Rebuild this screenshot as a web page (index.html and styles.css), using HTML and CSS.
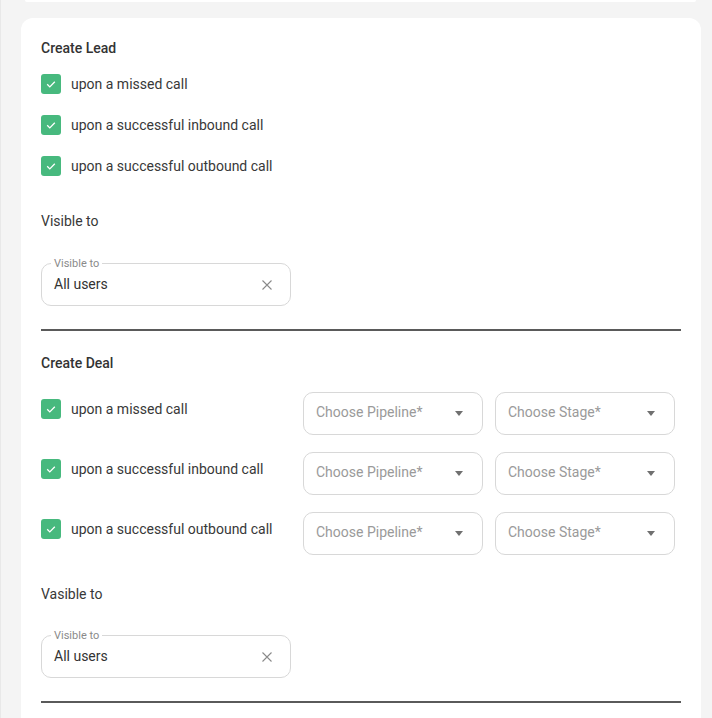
FILE: index.html
```html
<!DOCTYPE html>
<html>
<head>
<meta charset="utf-8">
<link rel="stylesheet" href="styles.css">
</head>
<body>
<div class="page">
  <div class="top-card"></div>
  <div class="card">
    <div class="title">Create Lead</div>
    <div class="lead-list">
      <label class="check-row"><span class="box"><svg viewBox="0 0 20 20" width="20" height="20"><path d="M6.2 10.3l2.6 2.6 5-5.2" fill="none" stroke="#fff" stroke-width="1.3"/></svg></span><span>upon a missed call</span></label>
      <label class="check-row"><span class="box"><svg viewBox="0 0 20 20" width="20" height="20"><path d="M6.2 10.3l2.6 2.6 5-5.2" fill="none" stroke="#fff" stroke-width="1.3"/></svg></span><span>upon a successful inbound call</span></label>
      <label class="check-row"><span class="box"><svg viewBox="0 0 20 20" width="20" height="20"><path d="M6.2 10.3l2.6 2.6 5-5.2" fill="none" stroke="#fff" stroke-width="1.3"/></svg></span><span>upon a successful outbound call</span></label>
    </div>
    <div class="sub">Visible to</div>
    <div class="field">
      <span class="field-label">Visible to</span>
      <span class="field-value">All users</span>
      <svg class="clear" viewBox="0 0 12 12" width="12" height="12"><path d="M1.5 1.5l9 9M10.5 1.5l-9 9" stroke="#8a8a8a" stroke-width="1.1" fill="none"/></svg>
    </div>
    <div class="divider"></div>

    <div class="title deal-title">Create Deal</div>
    <div class="deal-list">
      <div class="deal-row">
        <label class="check-row deal-check"><span class="box"><svg viewBox="0 0 20 20" width="20" height="20"><path d="M6.2 10.3l2.6 2.6 5-5.2" fill="none" stroke="#fff" stroke-width="1.3"/></svg></span><span>upon a missed call</span></label>
        <div class="select"><span>Choose Pipeline*</span><span class="caret"></span></div>
        <div class="select"><span>Choose Stage*</span><span class="caret"></span></div>
      </div>
      <div class="deal-row">
        <label class="check-row deal-check"><span class="box"><svg viewBox="0 0 20 20" width="20" height="20"><path d="M6.2 10.3l2.6 2.6 5-5.2" fill="none" stroke="#fff" stroke-width="1.3"/></svg></span><span>upon a successful inbound call</span></label>
        <div class="select"><span>Choose Pipeline*</span><span class="caret"></span></div>
        <div class="select"><span>Choose Stage*</span><span class="caret"></span></div>
      </div>
      <div class="deal-row">
        <label class="check-row deal-check"><span class="box"><svg viewBox="0 0 20 20" width="20" height="20"><path d="M6.2 10.3l2.6 2.6 5-5.2" fill="none" stroke="#fff" stroke-width="1.3"/></svg></span><span>upon a successful outbound call</span></label>
        <div class="select"><span>Choose Pipeline*</span><span class="caret"></span></div>
        <div class="select"><span>Choose Stage*</span><span class="caret"></span></div>
      </div>
    </div>
    <div class="sub sub-deal">Vasible to</div>
    <div class="field field-deal">
      <span class="field-label">Visible to</span>
      <span class="field-value">All users</span>
      <svg class="clear" viewBox="0 0 12 12" width="12" height="12"><path d="M1.5 1.5l9 9M10.5 1.5l-9 9" stroke="#8a8a8a" stroke-width="1.1" fill="none"/></svg>
    </div>
    <div class="divider divider-deal"></div>
  </div>
</div>
</body>
</html>
```

FILE: styles.css
```css
* { box-sizing: border-box; }
html, body { margin: 0; padding: 0; }
body {
  background: #f4f4f4;
  font-family: Roboto, "Liberation Sans", sans-serif;
  font-size: 14px;
  line-height: 20px;
  color: #363636;
  height: 718px;
  overflow: hidden;
}
.page {
  border-left: 1px solid #e8e8e8;
  height: 718px;
  padding-left: 20px;
}
.top-card {
  margin-left: 4px;
  width: 671px;
  height: 2px;
  background: #fff;
  border-radius: 0 0 10px 10px;
}
.card {
  margin-top: 16px;
  width: 680px;
  background: #fff;
  border-radius: 12px 12px 0 0;
  padding: 20px 20px 40px;
}
.title {
  font-weight: 500;
  color: #333;
}
.lead-list {
  margin-top: 16px;
  display: flex;
  flex-direction: column;
  gap: 21px;
}
.check-row {
  display: flex;
  align-items: center;
  gap: 10px;
  color: #383838;
}
.box {
  width: 20px;
  height: 20px;
  border-radius: 3px;
  background: #47b97e;
  display: flex;
  flex-shrink: 0;
}
.sub {
  margin-top: 35px;
  color: #383838;
}
.field {
  position: relative;
  margin-top: 32px;
  width: 250px;
  height: 43px;
  border: 1px solid #d8d8d8;
  border-radius: 10px;
  display: flex;
  align-items: center;
  padding: 0 17px 2px 12px;
}
.field-label {
  position: absolute;
  left: 9px;
  top: -7px;
  padding: 0 3px;
  background: #fff;
  font-size: 11px;
  line-height: 14px;
  color: #8a8a8a;
}
.field-value {
  flex: 1;
  color: #333;
}
.clear {
  margin-top: 2px;
}
.divider {
  margin-top: 23px;
  height: 2px;
  background: #5a5a5a;
}
.deal-title {
  margin-top: 22px;
}
.deal-list {
  margin-top: 19px;
  display: flex;
  flex-direction: column;
  gap: 17px;
}
.deal-row {
  display: flex;
  align-items: flex-start;
}
.deal-check {
  width: 262px;
  flex-shrink: 0;
  padding-top: 7px;
  align-items: center;
}
.select {
  width: 180px;
  height: 43px;
  flex-shrink: 0;
  border: 1px solid #d8d8d8;
  border-radius: 10px;
  display: flex;
  align-items: center;
  justify-content: space-between;
  padding: 0 19px 3px 12px;
  color: #9a9a9a;
  margin-right: 12px;
}
.caret {
  width: 0;
  height: 0;
  margin-top: 3px;
  border-left: 4px solid transparent;
  border-right: 4px solid transparent;
  border-top: 5px solid #707070;
}
.sub-deal {
  margin-top: 29px;
}
.field-deal {
  margin-top: 31px;
}
.divider-deal {
  margin-top: 23px;
}
```
